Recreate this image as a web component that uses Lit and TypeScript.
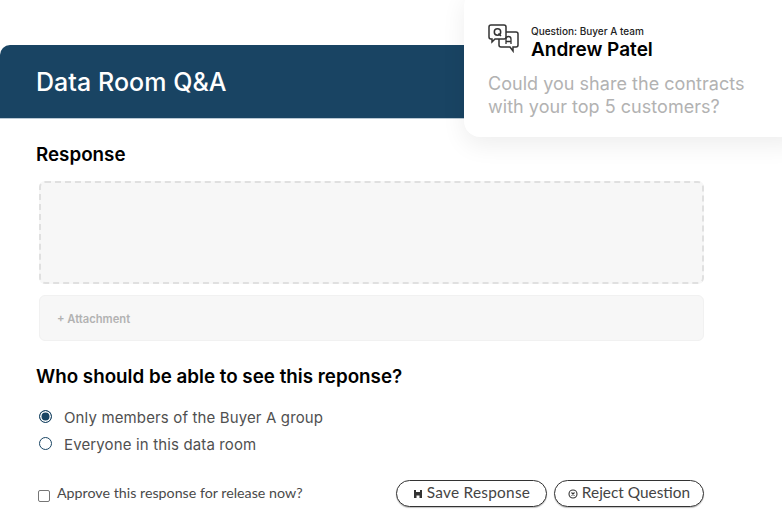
import { LitElement, html, css } from "lit";
import { customElement, state } from "lit/decorators.js";

@customElement("app-root")
export class AppRoot extends LitElement {
  static styles = css`
    :host {
      display: block;
      position: relative;
      width: 782px;
      height: 521px;
      overflow: hidden;
      background: #fff;
      font-family: Inter, "Liberation Sans", sans-serif;
      color: #000;
    }
    .page {
      padding-top: 45px;
    }
    .banner {
      height: 74px;
      box-sizing: border-box;
      padding-left: 36px;
      display: flex;
      align-items: center;
      background: #194463;
      border-top-left-radius: 10px;
      border-bottom: 1px solid #b9c8d3;
      color: #fff;
      font-size: 25px;
      font-weight: 500;
      letter-spacing: 0.05px;
    }
    .content {
      padding: 25px 78px 0 36px;
    }
    h2 {
      margin: 0;
      font-size: 18.8px;
      line-height: 22px;
      font-weight: 600;
    }
    .editor {
      margin: 15px 0 0 3px;
      height: 103px;
      box-sizing: border-box;
      background: #f7f7f7;
      border: 2px dashed #e0e0e0;
      border-radius: 6px;
    }
    .attach {
      margin: 11px 0 0 3px;
      height: 46px;
      box-sizing: border-box;
      padding: 1px 0 0 17px;
      display: flex;
      align-items: center;
      background: #f7f7f7;
      border: 1px solid #f1f1f1;
      border-radius: 6px;
      font-size: 11.2px;
      font-weight: 600;
      color: #b2b2b2;
    }
    .who {
      margin-top: 25px;
    }
    .options {
      margin-top: 19px;
      display: flex;
      flex-direction: column;
      gap: 7px;
    }
    .option {
      display: flex;
      align-items: center;
      gap: 12px;
      padding-left: 3px;
      height: 20px;
      font-size: 15px;
      letter-spacing: 0.14px;
      color: #505050;
    }
    .radio {
      width: 13px;
      height: 13px;
      margin-top: -2px;
      box-sizing: border-box;
      border: 1.5px solid #194463;
      border-radius: 50%;
      background: #fff;
    }
    .radio.on {
      background: #194463;
      box-shadow: inset 0 0 0 1.5px #fff;
    }
    .footer {
      margin-top: 26px;
      display: flex;
      align-items: center;
      padding-left: 2px;
    }
    .approve {
      display: flex;
      align-items: center;
      gap: 7px;
      font-family: Lato, "Liberation Sans", sans-serif;
      font-size: 14.25px;
      color: #4a4a4a;
      flex: 1;
    }
    .check {
      width: 12px;
      height: 12px;
      margin-top: 4px;
      box-sizing: border-box;
      border: 1px solid #767676;
      border-radius: 2px;
      background: #fff;
    }
    .approve span {
      margin-top: -3px;
    }
    .buttons {
      display: flex;
      gap: 7px;
    }
    .btn {
      width: 150px;
      height: 27px;
      box-sizing: border-box;
      display: flex;
      align-items: center;
      justify-content: center;
      gap: 4px;
      padding: 0 0 3px;
      background: #fff;
      border: 1px solid #333;
      border-radius: 14px;
      box-shadow: 0 1px 1px rgba(0, 0, 0, 0.25);
      font-family: Lato, "Liberation Sans", sans-serif;
      font-size: 15.4px;
      color: #444;
    }
    .btn.save {
      width: 151px;
      letter-spacing: 0.25px;
    }
    .btn svg {
      width: 10px;
      height: 10px;
      margin-top: 3px;
    }
    .card {
      position: absolute;
      left: 464px;
      top: -10px;
      width: 340px;
      height: 147px;
      box-sizing: border-box;
      padding: 32px 0 0 24px;
      background: #fff;
      border-radius: 16px;
      box-shadow: 0 8px 24px rgba(0, 0, 0, 0.07);
    }
    .card-head {
      display: flex;
      align-items: center;
      gap: 12px;
    }
    .card-head svg {
      width: 31px;
      height: 29px;
      flex: none;
      margin-bottom: 6px;
    }
    .team {
      font-size: 10px;
      line-height: 13px;
      margin-top: 3px;
      font-weight: 500;
      color: #222;
    }
    .name {
      font-size: 19px;
      line-height: 23px;
      font-weight: 600;
    }
    .question {
      margin-top: 11px;
      font-size: 18px;
      line-height: 23px;
      letter-spacing: 0.03px;
      color: #b2b2b2;
    }
  `;

  @state() private options = [
    { label: "Only members of the Buyer A group", on: true },
    { label: "Everyone in this data room", on: false },
  ];

  render() {
    return html`
      <div class="page">
        <div class="banner">Data Room Q&amp;A</div>
        <div class="content">
          <h2>Response</h2>
          <div class="editor"></div>
          <div class="attach">+ Attachment</div>
          <h2 class="who">Who should be able to see this reponse?</h2>
          <div class="options">
            ${this.options.map(
              (o) => html`
                <div class="option">
                  <div class="radio ${o.on ? "on" : ""}"></div>
                  ${o.label}
                </div>
              `
            )}
          </div>
          <div class="footer">
            <div class="approve">
              <div class="check"></div>
              <span>Approve this response for release now?</span>
            </div>
            <div class="buttons">
              <button class="btn save">
                <svg viewBox="0 0 10 10" fill="#333">
                  <path d="M1 1h2v2h4V1h2v8H6.5V6.5h-3V9H1z" />
                </svg>
                Save Response
              </button>
              <button class="btn">
                <svg viewBox="0 0 10 10" fill="none" stroke="#333" stroke-width="1.1">
                  <circle cx="5" cy="5" r="4" />
                  <path d="M3.5 3.5l3 3M6.5 3.5l-3 3" />
                </svg>
                Reject Question
              </button>
            </div>
          </div>
        </div>
      </div>
      <div class="card">
        <div class="card-head">
          <svg viewBox="0 0 31 29" fill="none" stroke="#333" stroke-width="1.5">
            <path d="M3 1h13a2 2 0 0 1 2 2v10a2 2 0 0 1-2 2H7l-3 3v-3H3a2 2 0 0 1-2-2V3a2 2 0 0 1 2-2z" />
            <path d="M18 8h10a2 2 0 0 1 2 2v11a2 2 0 0 1-2 2h-3v4l-3-4H13a2 2 0 0 1-2-2v-6" />
            <circle cx="9.5" cy="8" r="3.2" />
            <path d="M10.5 9.5l2.5 2.5" />
            <path d="M18 20v-5a2.5 2.5 0 0 1 5 0v5M18 17.5h5" stroke-width="1.3" />
          </svg>
          <div>
            <div class="team">Question: Buyer A team</div>
            <div class="name">Andrew Patel</div>
          </div>
        </div>
        <div class="question">Could you share the contracts<br />with your top 5 customers?</div>
      </div>
    `;
  }
}
